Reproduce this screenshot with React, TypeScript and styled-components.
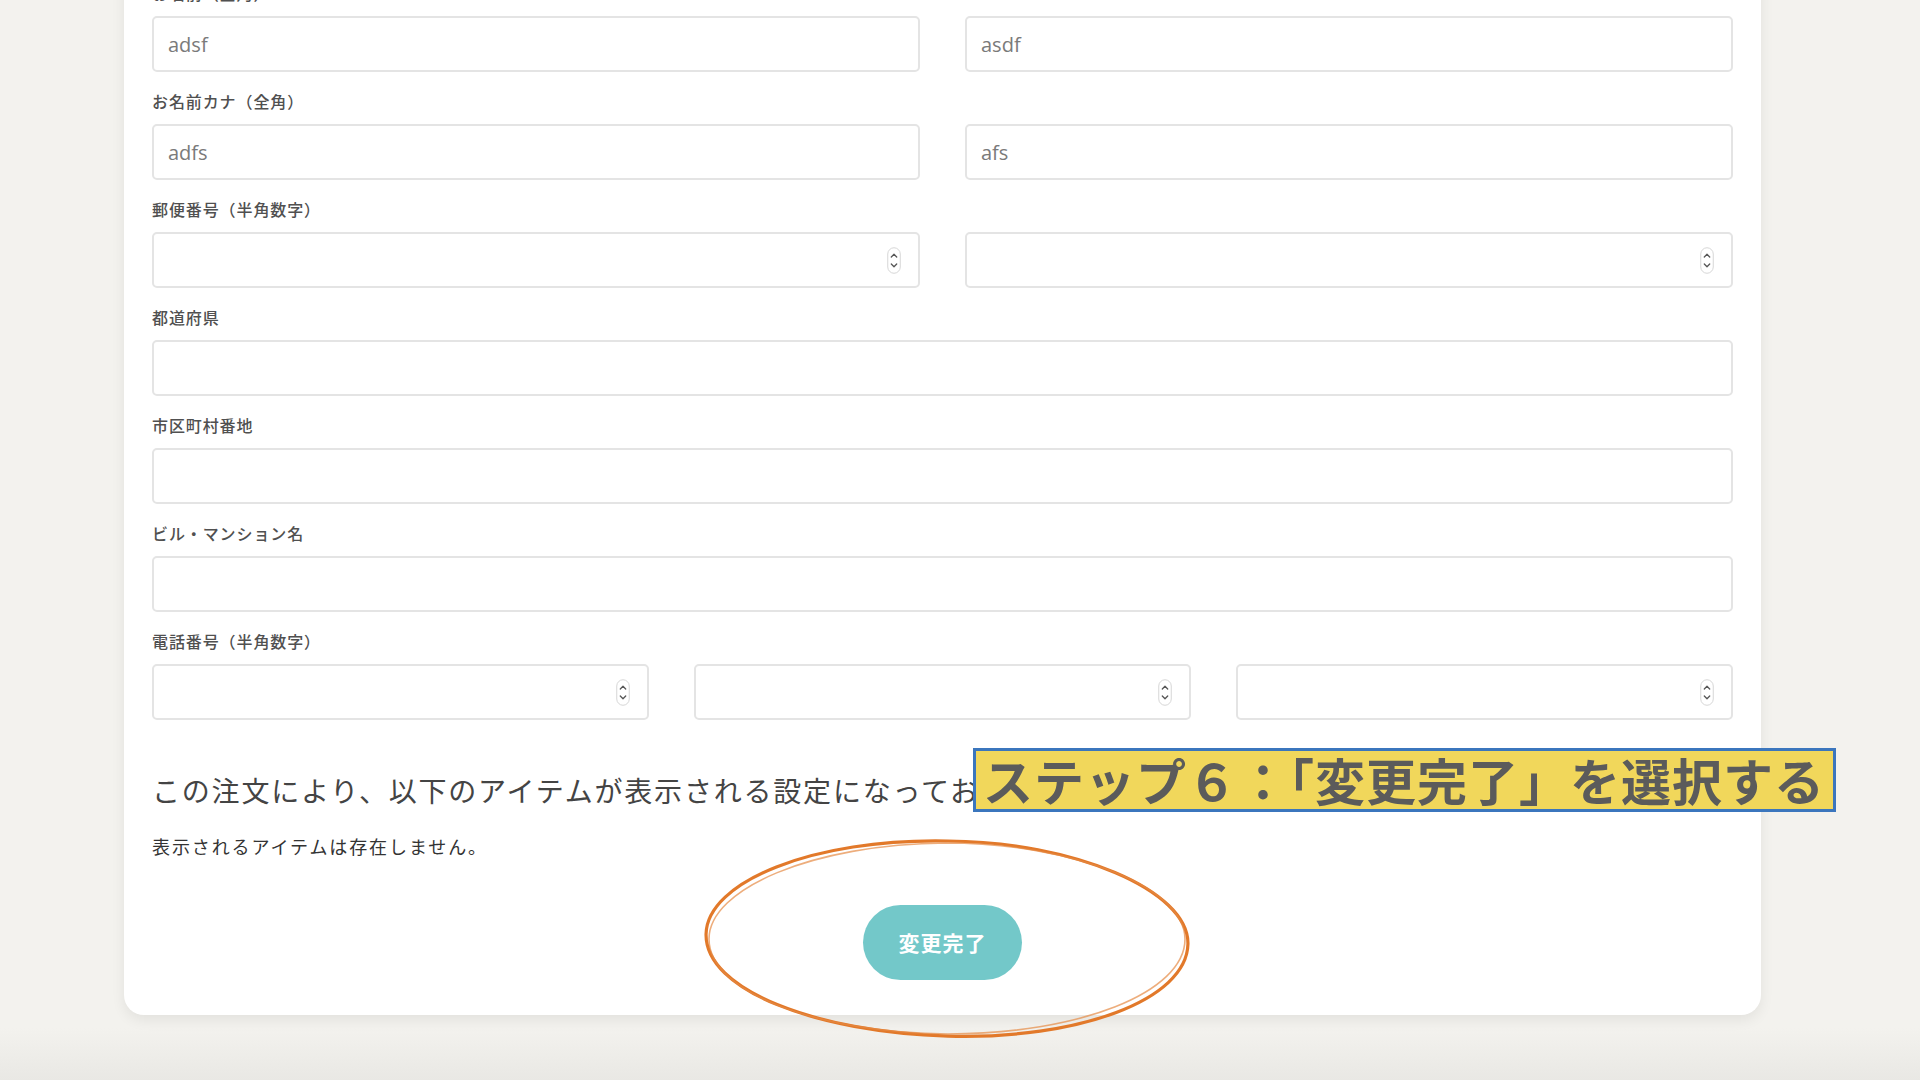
import React from "react";
import styled, { createGlobalStyle } from "styled-components";

const GlobalStyle = createGlobalStyle`
  html, body {
    margin: 0;
    padding: 0;
    height: 1080px;
    overflow: hidden;
    background: #f3f2ee;
  }
  * { box-sizing: border-box; }
`;

const JP = `"Noto Sans CJK JP", "Noto Sans", sans-serif`;

const Page = styled.div`
  position: relative;
  width: 1920px;
  height: 1080px;
  overflow: hidden;
  padding: 0 159px 0 124px;
  background: linear-gradient(to bottom, #f3f2ee 0, #f3f2ee 1028px, #e9e8e4 1080px);
  font-family: ${JP};
`;

const Card = styled.div`
  margin-top: -45px;
  background: #ffffff;
  border-radius: 0 0 20px 20px;
  box-shadow: 0 5px 14px rgba(0, 0, 0, 0.07);
  padding: 28px 28px 35px 28px;
  display: flex;
  flex-direction: column;
`;

const Field = styled.div`
  display: flex;
  flex-direction: column;
  margin-bottom: 19px;
`;

const Label = styled.div`
  font-family: ${JP};
  font-size: 16px;
  font-weight: 500;
  line-height: 24px;
  color: #505050;
  margin: -2px 0 11px 0;
  letter-spacing: 0.9px;
`;

const Row = styled.div<{ $cols: number }>`
  display: grid;
  grid-template-columns: repeat(${(p) => p.$cols}, 1fr);
  column-gap: 45px;
`;

const InputBox = styled.div`
  height: 56px;
  border: 2px solid #e4e4e4;
  border-radius: 5px;
  background: #fff;
  display: flex;
  align-items: center;
  justify-content: space-between;
  padding: 0 17px 0 14px;
`;

const InputText = styled.span`
  font-family: "Open Sans", "Noto Sans", sans-serif;
  font-size: 20px;
  color: #7a7a7a;
`;

const SpinBox = styled.svg`
  flex: none;
  width: 14px;
  height: 27px;
`;

const Spinner = () => (
  <SpinBox viewBox="0 0 14 27">
    <rect x="0.75" y="0.75" width="12.5" height="25.5" rx="6.25" fill="#fff" stroke="#d6d6d6" strokeWidth="1" />
    <path d="M4.3 10 L7 7.3 L9.7 10" fill="none" stroke="#555" strokeWidth="1.3" strokeLinecap="round" strokeLinejoin="round" />
    <path d="M4.3 17 L7 19.7 L9.7 17" fill="none" stroke="#555" strokeWidth="1.3" strokeLinecap="round" strokeLinejoin="round" />
  </SpinBox>
);

const Heading = styled.div`
  margin-top: 31px;
  font-family: ${JP};
  font-size: 28px;
  line-height: 40px;
  letter-spacing: 1.8px;
  color: #444;
  white-space: nowrap;
`;

const Note = styled.div`
  margin-top: 23px;
  font-family: ${JP};
  font-size: 18px;
  line-height: 27px;
  letter-spacing: 1.9px;
  color: #333;
`;

const ButtonRow = styled.div`
  display: flex;
  justify-content: center;
  margin-top: 45px;
`;

const Button = styled.button`
  width: 159px;
  height: 75px;
  border: none;
  border-radius: 38px;
  background: #73c8c9;
  color: #fff;
  font-family: ${JP};
  font-size: 21px;
  font-weight: 700;
  letter-spacing: 1px;
  padding-bottom: 3px;
  cursor: pointer;
`;

const Callout = styled.div`
  position: absolute;
  left: 973px;
  top: 748px;
  width: 863px;
  height: 64px;
  background: #f1d75b;
  border: 3px solid #3b76bd;
  display: flex;
  align-items: center;
  padding: 0 0 2px 7px;
  font-family: ${JP};
  font-size: 50px;
  font-weight: 700;
  color: #5b5b5b;
  white-space: nowrap;
  letter-spacing: 1px;
  line-height: 1;
`;

const Ring = styled.svg`
  position: absolute;
  left: 700px;
  top: 835px;
  width: 492px;
  height: 206px;
  pointer-events: none;
`;

const Field2 = ({ label, values, cols, spin }: { label: string; values: string[]; cols: number; spin?: boolean }) => (
  <Field>
    <Label>{label}</Label>
    <Row $cols={cols}>
      {values.map((v, i) => (
        <InputBox key={i}>
          <InputText>{v}</InputText>
          {spin && <Spinner />}
        </InputBox>
      ))}
    </Row>
  </Field>
);

export default function App() {
  return (
    <>
      <GlobalStyle />
      <Page>
        <Card>
          <Field2 label="お名前（全角）" values={["adsf", "asdf"]} cols={2} />
          <Field2 label="お名前カナ（全角）" values={["adfs", "afs"]} cols={2} />
          <Field2 label="郵便番号（半角数字）" values={["", ""]} cols={2} spin />
          <Field2 label="都道府県" values={[""]} cols={1} />
          <Field2 label="市区町村番地" values={[""]} cols={1} />
          <Field2 label="ビル・マンション名" values={[""]} cols={1} />
          <Field2 label="電話番号（半角数字）" values={["", "", ""]} cols={3} spin />
          <Heading>この注文により、以下のアイテムが表示される設定になっております。</Heading>
          <Note>表示されるアイテムは存在しません。</Note>
          <ButtonRow>
            <Button>変更完了</Button>
          </ButtonRow>
        </Card>
        <Callout>ステップ６：「変更完了」を選択する</Callout>
        <Ring viewBox="0 0 492 206">
          <path
            d="M246 6 C 370 4, 488 50, 488 104 C 488 160, 380 202, 250 201 C 118 200, 6 160, 6 104 C 6 52, 110 6, 246 6 Z"
            fill="none"
            stroke="#e2792a"
            strokeWidth="3.2"
            transform="rotate(1.2 246 104)"
          />
          <path
            d="M246 8 C 372 8, 485 52, 485 104 C 485 158, 378 199, 248 199 C 120 198, 9 158, 9 104 C 9 54, 112 9, 246 8"
            fill="none"
            stroke="#e58a44"
            strokeWidth="1.6"
            opacity="0.7"
          />
        </Ring>
      </Page>
    </>
  );
}
